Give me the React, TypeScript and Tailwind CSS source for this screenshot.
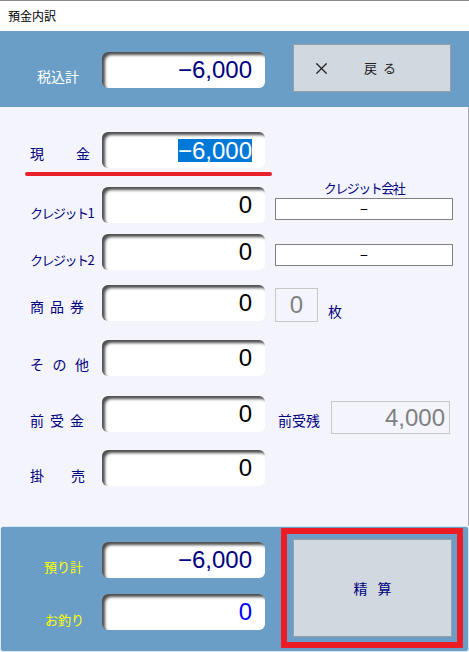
import { X } from "lucide-react";

const jp = "font-['Noto_Sans_CJK_JP','Noto_Sans',sans-serif]";
const num = "font-['Liberation_Sans',Arial,sans-serif]";

const sunken = `flex h-[36px] w-[163px] shrink-0 items-center justify-end rounded-[6px] bg-white pr-[13px] text-[24px] leading-none shadow-[inset_3px_3px_3px_rgba(0,0,0,0.7)] ${num}`;

function Spread({ chars, w }: { chars: string[]; w: string }) {
  return (
    <div className={`flex justify-between ${w}`}>
      {chars.map((c, i) => (
        <span key={i}>{c}</span>
      ))}
    </div>
  );
}

function Label({ mt, children }: { mt: string; children: React.ReactNode }) {
  return (
    <div className={`w-[102px] shrink-0 pl-[30px] text-[14px] leading-[16px] text-[#000080] ${mt}`}>
      {children}
    </div>
  );
}

export default function App() {
  return (
    <div className={`flex h-[652px] w-[469px] flex-col bg-white ${jp}`}>
      {/* title bar */}
      <div className="flex h-[31px] shrink-0 items-center border-t border-[#8a8a8a] pl-[8px] text-[12px] text-black">
        預金内訳
      </div>

      {/* header band */}
      <div className="flex h-[76px] shrink-0 items-start bg-[#6a9ec6]">
        <div className="mt-[37px] w-[102px] shrink-0 pl-[37px] text-[14px] leading-[16px] text-white">
          税込計
        </div>
        <div className={`${sunken} mt-[21px] text-[#000080]`}>−6,000</div>
        <button className="ml-[28px] mt-[13px] flex h-[48px] w-[158px] items-center border border-[#9a9fa6] bg-[#d1d8df] pl-[18px] text-[13px] text-[#222]">
          <X size={19} strokeWidth={1.5} />
          <span className="ml-[33px] tracking-[6px]">戻る</span>
        </button>
      </div>

      {/* main */}
      <div className="flex flex-1 flex-col border-r border-[#a8a8b0] bg-[#f4f4fd]">
        <div className="mt-[25px] flex h-[36px] items-start">
          <Label mt="mt-[13px]">
            <Spread chars={["現", "金"]} w="w-[60px]" />
          </Label>
          <div className={sunken}>
            <span className="bg-[#0078d7] leading-[23px] text-white">−6,000</span>
          </div>
        </div>
        <div className="ml-[25px] mt-[4px] h-[4px] w-[247px] rounded-full bg-[#e8202a]" />

        <div className="mt-[11px] flex h-[36px] items-start">
          <Label mt="mt-[17px]">
            <span className="text-[13px] tracking-[-1.5px]">クレジット1</span>
          </Label>
          <div className={`${sunken} text-black`}>0</div>
          <div className="-mt-[7px] ml-[10px] flex flex-col">
            <div className="text-center text-[13px] leading-[16px] tracking-[-1.5px] text-[#000080]">
              クレジット会社
            </div>
            <div className="mt-[2px] flex h-[22px] w-[178px] items-center justify-center border border-[#808080] bg-white text-[14px] text-black">
              −
            </div>
          </div>
        </div>

        <div className="mt-[11px] flex h-[36px] items-start">
          <Label mt="mt-[17px]">
            <span className="text-[13px] tracking-[-1.5px]">クレジット2</span>
          </Label>
          <div className={`${sunken} text-black`}>0</div>
          <div className="ml-[10px] mt-[10px] flex h-[22px] w-[178px] items-center justify-center border border-[#808080] bg-white text-[14px] text-black">
            −
          </div>
        </div>

        <div className="mt-[15px] flex h-[36px] items-start">
          <Label mt="mt-[13px]">
            <Spread chars={["商", "品", "券"]} w="w-[54px]" />
          </Label>
          <div className={`${sunken} text-black`}>0</div>
          <div className={`ml-[10px] mt-[3px] flex h-[34px] w-[43px] items-center justify-center border border-[#c8c8c8] text-[24px] text-[#808080] ${num}`}>
            0
          </div>
          <div className="ml-[10px] mt-[18px] text-[14px] leading-[16px] text-[#000080]">枚</div>
        </div>

        <div className="mt-[19px] flex h-[36px] items-start">
          <Label mt="mt-[16px]">
            <Spread chars={["そ", "の", "他"]} w="w-[59px]" />
          </Label>
          <div className={`${sunken} text-black`}>0</div>
        </div>

        <div className="mt-[20px] flex h-[36px] items-start">
          <Label mt="mt-[16px]">
            <Spread chars={["前", "受", "金"]} w="w-[54px]" />
          </Label>
          <div className={`${sunken} text-black`}>0</div>
          <div className="ml-[13px] mt-[16px] text-[14px] leading-[16px] text-[#000080]">前受残</div>
          <div className={`ml-[11px] mt-[5px] flex h-[33px] w-[119px] items-center justify-end border border-[#c8c8c8] pr-[4px] text-[24px] text-[#808080] ${num}`}>
            4,000
          </div>
        </div>

        <div className="mt-[18px] flex h-[36px] items-start">
          <Label mt="mt-[17px]">
            <Spread chars={["掛", "売"]} w="w-[55px]" />
          </Label>
          <div className={`${sunken} text-black`}>0</div>
        </div>
      </div>

      {/* bottom panel */}
      <div className="flex h-[126px] shrink-0 items-start rounded-[3px] border border-[#dce8f3] bg-[#6a9ec6]">
        <div className="flex flex-col">
          <div className="mt-[15px] flex h-[36px] items-start">
            <div className="mt-[17px] w-[101px] shrink-0 pl-[43px] text-[13px] leading-[16px] text-[#ffff00]">預り計</div>
            <div className={`${sunken} text-[#000080]`}>−6,000</div>
          </div>
          <div className="mt-[16px] flex h-[36px] items-start">
            <div className="mt-[18px] w-[101px] shrink-0 pl-[44px] text-[13px] leading-[16px] text-[#ffff00]">お釣り</div>
            <div className={`${sunken} text-[#0000ff]`}>0</div>
          </div>
        </div>
        <div className="ml-[16px] mt-[1px] border-[6px] border-[#ee1c24] pb-[5px] pl-[6px] pr-[5px] pt-[5px]">
          <button className="flex h-[98px] w-[159px] items-center justify-center border border-[#9a9fa6] bg-[#d1d8df] text-[14px] tracking-[10px] text-[#000080]">
            <span className="ml-[10px]">精算</span>
          </button>
        </div>
      </div>
    </div>
  );
}
